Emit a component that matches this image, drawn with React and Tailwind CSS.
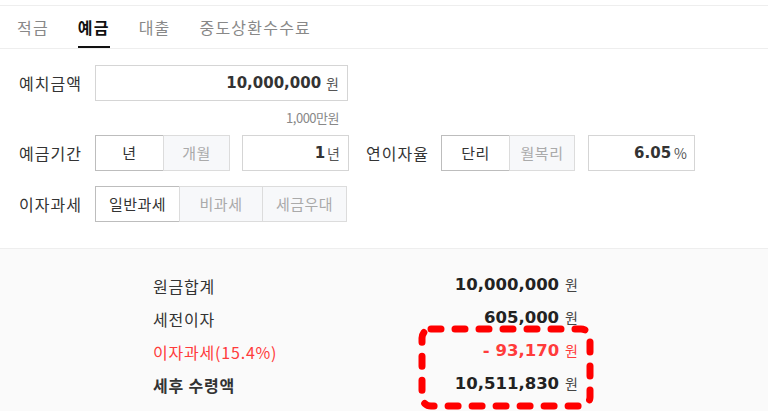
import React from "react";

const kr = { fontFamily: '"Noto Sans CJK KR", "Noto Sans", sans-serif' };
const num = { fontFamily: '"DejaVu Sans", "Noto Sans CJK KR", sans-serif' };

const tabs = ["적금", "예금", "대출", "중도상환수수료"];

function Seg({ items, active, widths }) {
  return (
    <div className="flex h-[36px]">
      {items.map((it, i) => (
        <div
          key={it}
          className={`flex items-center justify-center border text-[15px] tracking-[0.5px] ${
            i === active
              ? "bg-white text-[#333] border-[#bdbdbd]"
              : "bg-[#f7f8fa] text-[#aaa] border-[#dcdcdc]"
          } ${i > 0 ? "-ml-px" : ""}`}
          style={{ width: widths[i] }}
        >
          {it}
        </div>
      ))}
    </div>
  );
}

function Row({ label, value, unit, red, bold }) {
  return (
    <div className="flex items-center justify-between h-[33px]">
      <span
        className={`text-[16px] tracking-[0.8px] ${red ? "text-[#ff3b3b]" : "text-[#333]"} ${
          bold ? "font-bold" : ""
        }`}
      >
        {label}
      </span>
      <span className="flex items-baseline gap-[6px]">
        <span
          className={`text-[16.5px] font-bold ${red ? "text-[#ff3b3b]" : "text-[#222]"}`}
          style={num}
        >
          {value}
        </span>
        <span className={`text-[14px] ${red ? "text-[#ff3b3b]" : "text-[#444]"}`}>{unit}</span>
      </span>
    </div>
  );
}

export default function App() {
  return (
    <div className="relative w-[768px] h-[411px] overflow-hidden bg-white" style={kr}>
      {/* Tabs */}
      <div className="mt-[5px] border-t border-b border-[#eeeeee] h-[44px] flex items-stretch pl-[17px] gap-[29px]">
        {tabs.map((t, i) => (
          <div
            key={t}
            className={`flex items-center text-[16px] tracking-[1.2px] ${
              i === 1 ? "text-[#111] font-bold border-b-2 border-[#111]" : "text-[#888]"
            }`}
          >
            <span className={i === 1 ? "pt-[2px]" : ""}>{t}</span>
          </div>
        ))}
      </div>

      {/* Form */}
      <div className="px-[19px] pt-[16px] pb-[26px]">
        <div className="flex items-center">
          <span className="w-[76px] text-[16px] tracking-[1px] text-[#333]">예치금액</span>
          <div className="w-[253px] h-[36px] border border-[#d5d5d5] flex items-center justify-end pr-[8px] gap-[5px]">
            <span className="text-[15px] font-bold text-[#333]" style={num}>10,000,000</span>
            <span className="text-[14px] text-[#555]">원</span>
          </div>
        </div>
        <div className="w-[320px] text-right text-[13px] text-[#888] tracking-[-0.5px] mt-[8px] h-[17px] leading-[17px]">
          1,000만원
        </div>

        <div className="flex items-center mt-[9px]">
          <span className="w-[76px] text-[16px] tracking-[1px] text-[#333]">예금기간</span>
          <Seg items={["년", "개월"]} active={0} widths={[69, 67]} />
          <div className="ml-[12px] w-[107px] h-[36px] border border-[#d5d5d5] flex items-center justify-end pr-[8px] gap-[2px]">
            <span className="text-[15px] font-bold text-[#333]" style={num}>1</span>
            <span className="text-[14px] text-[#555]">년</span>
          </div>
          <span className="ml-[17px] w-[75px] text-[16px] tracking-[1px] text-[#333]">연이자율</span>
          <Seg items={["단리", "월복리"]} active={0} widths={[69, 66]} />
          <div className="ml-[13px] w-[107px] h-[36px] border border-[#d5d5d5] flex items-center justify-end pr-[7px] gap-[3px]">
            <span className="text-[15px] font-bold text-[#333]" style={num}>6.05</span>
            <span className="text-[14px] text-[#555]">%</span>
          </div>
        </div>

        <div className="flex items-center mt-[15px]">
          <span className="w-[76px] text-[16px] tracking-[1px] text-[#333]">이자과세</span>
          <Seg items={["일반과세", "비과세", "세금우대"]} active={0} widths={[85, 84, 85]} />
        </div>
      </div>

      {/* Results */}
      <div className="bg-[#fafafa] border-t border-[#eeeeee] h-full pt-[20px]">
        <div className="ml-[153px] w-[425px]">
          <Row label="원금합계" value="10,000,000" unit="원" />
          <Row label="세전이자" value="605,000" unit="원" />
          <Row label="이자과세(15.4%)" value="- 93,170" unit="원" red />
          <Row label="세후 수령액" value="10,511,830" unit="원" bold />
        </div>
      </div>

      {/* Annotation */}
      <svg className="absolute left-[418px] top-[325px]" width="176" height="85" viewBox="0 0 176 85">
        <rect
          x="4"
          y="4"
          width="168"
          height="77"
          rx="9"
          fill="none"
          stroke="#ff0000"
          strokeWidth="7"
          strokeDasharray="10 14"
          strokeLinecap="round"
        />
      </svg>
    </div>
  );
}
